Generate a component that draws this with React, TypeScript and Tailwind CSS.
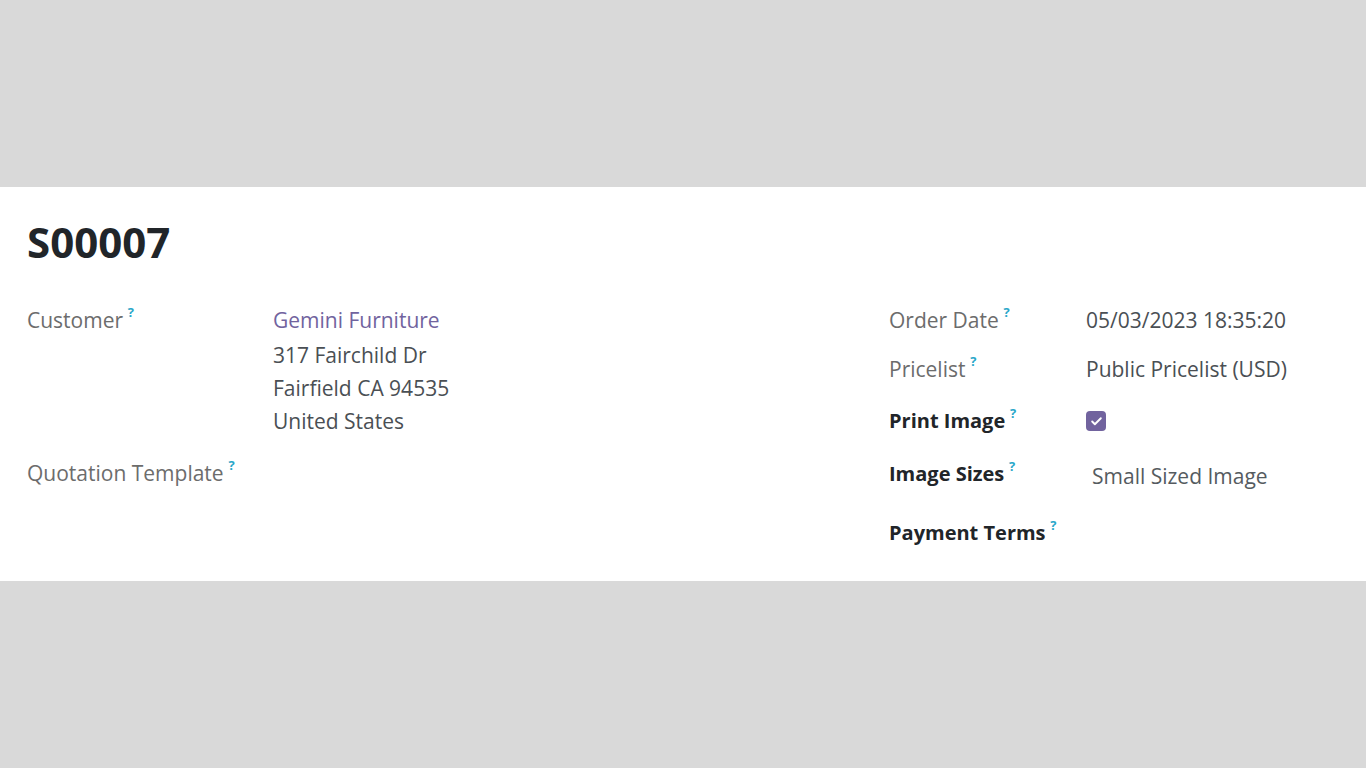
import { Check } from "lucide-react";

type TField = {
  label: string;
  bold?: boolean;
  h: string;
  value?: React.ReactNode;
};

function Label({ text, bold }: { text: string; bold?: boolean }) {
  return (
    <span
      className={`relative whitespace-nowrap ${bold ? "text-[20px] font-bold text-[#212529]" : "text-[#6c6c6c]"}`}
    >
      {text}
      <span className="absolute right-[-11px] top-[-4px] text-[13px] font-bold leading-[20px] text-[#2aa7c9]">
        ?
      </span>
    </span>
  );
}

const rightFields: TField[] = [
  { label: "Order Date", h: "h-[49px]", value: "05/03/2023 18:35:20" },
  { label: "Pricelist", h: "h-[51px]", value: "Public Pricelist (USD)" },
  {
    label: "Print Image",
    bold: true,
    h: "h-[53px]",
    value: (
      <span className="mt-[7px] flex h-[20px] w-[20px] items-center justify-center rounded-[4px] bg-[#71639e]">
        <Check size={13} strokeWidth={3.5} className="text-white" />
      </span>
    ),
  },
  {
    label: "Image Sizes",
    bold: true,
    h: "h-[59px]",
    value: <div className="ml-[6px] mt-[3px] text-[#555b60]">Small Sized Image</div>,
  },
  { label: "Payment Terms", bold: true, h: "h-[33px]" },
];

function App() {
  return (
    <div
      className="min-h-[768px] bg-[#d9d9d9] pt-[187px] text-[21px] leading-[33px]"
      style={{ fontFamily: "'Open Sans', 'Noto Sans', sans-serif" }}
    >
      <div className="h-[394px] bg-white pl-[27px] pt-[31px]">
        <h1 className="text-[42px] font-bold leading-[48px] text-[#212529]">S00007</h1>

        <div className="mt-[38px] flex">
          {/* left group */}
          <div className="w-[862px]">
            <div className="flex">
              <div className="w-[246px]">
                <Label text="Customer" />
              </div>
              <div className="text-[#4a4f54]">
                <div className="mb-[2px] text-[#71639e]">Gemini Furniture</div>
                <div>317 Fairchild Dr</div>
                <div>Fairfield CA 94535</div>
                <div>United States</div>
              </div>
            </div>
            <div className="mt-[19px]">
              <Label text="Quotation Template" />
            </div>
          </div>

          {/* right group */}
          <div>
            {rightFields.map((f) => (
              <div key={f.label} className={`flex ${f.h}`}>
                <div className="w-[197px]">
                  <Label text={f.label} bold={f.bold} />
                </div>
                <div className="text-[#4a4f54]">{f.value}</div>
              </div>
            ))}
          </div>
        </div>
      </div>
    </div>
  );
}

export default App;
